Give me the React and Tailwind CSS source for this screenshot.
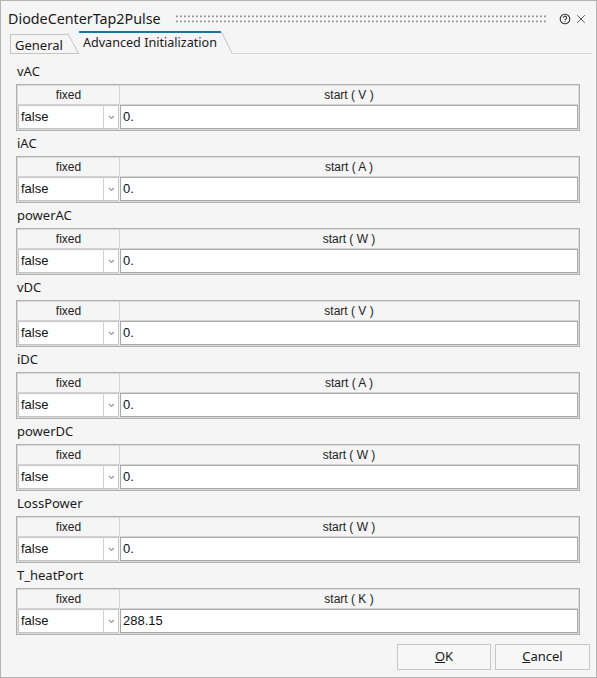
import { X } from 'lucide-react';

const sections = [
  { name: 'vAC', unit: 'V', value: '0.' },
  { name: 'iAC', unit: 'A', value: '0.' },
  { name: 'powerAC', unit: 'W', value: '0.' },
  { name: 'vDC', unit: 'V', value: '0.' },
  { name: 'iDC', unit: 'A', value: '0.' },
  { name: 'powerDC', unit: 'W', value: '0.' },
  { name: 'LossPower', unit: 'W', value: '0.' },
  { name: 'T_heatPort', unit: 'K', value: '288.15' },
];

const ui = { fontFamily: '"Noto Sans", "Open Sans", sans-serif' };
const arial = { fontFamily: '"Liberation Sans", Arial, sans-serif' };

function Dots() {
  return (
    <svg className="flex-1 h-[8px] ml-[15px] mr-[12px]" preserveAspectRatio="none">
      <defs>
        <pattern id="grip" width="4" height="5" patternUnits="userSpaceOnUse">
          <rect x="0" y="0.5" width="1.8" height="1.8" fill="#939393" />
        </pattern>
      </defs>
      <rect width="100%" height="8" fill="url(#grip)" />
    </svg>
  );
}

function HelpIcon() {
  return (
    <svg width="12" height="12" viewBox="0 0 12 12" className="text-[#333]">
      <circle cx="6" cy="6" r="4.8" fill="none" stroke="currentColor" strokeWidth="1.1" />
      <path d="M4.4 4.8a1.6 1.6 0 1 1 2.3 1.4c-.5.3-.7.5-.7 1" fill="none" stroke="currentColor" strokeWidth="1.1" />
      <circle cx="6" cy="8.6" r=".6" fill="currentColor" />
    </svg>
  );
}

function Slant({ h }) {
  return (
    <svg width="12" height={h} className="shrink-0">
      <line x1="0.5" y1="0" x2="11.5" y2={h} stroke="#c4c4c4" strokeWidth="1" />
    </svg>
  );
}

function Chevron() {
  return (
    <svg width="7" height="5" viewBox="0 0 7 5">
      <path d="M1 1l2.5 2.5L6 1" fill="none" stroke="#9a9a9a" strokeWidth="1.2" />
    </svg>
  );
}

function Section({ item }) {
  return (
    <div>
      <div className="h-[25px] flex items-center pl-[1px] text-[13px] text-[#1a1a1a]" style={ui}>
        {item.name}
      </div>
      <div className="border border-[#b0b0b0] p-px bg-[#dadada]">
        <div className="bg-[#f5f5f5]" style={arial}>
          <div className="flex h-[19px] border-b border-[#d4d4d4] text-[12px] text-[#222] leading-[18px]">
            <div className="w-[102px] text-center border-r border-[#d4d4d4]">fixed</div>
            <div className="flex-1 text-center">start ( {item.unit} )</div>
          </div>
          <div className="flex h-[24px] gap-px text-[13px] text-[#111]">
            <div className="w-[101px] flex bg-white border border-[#c6c6c6]">
              <div className="flex-1 pl-[2px] leading-[22px]">false</div>
              <div className="w-[15px] border-l border-[#d0d0d0] flex items-center justify-center">
                <Chevron />
              </div>
            </div>
            <div className="flex-1 bg-white border border-[#a9a9a9] pl-[2px] leading-[22px]">{item.value}</div>
          </div>
        </div>
      </div>
    </div>
  );
}

export default function App() {
  return (
    <div className="w-[597px] h-[678px] bg-[#f5f5f5] border border-[#b4b4b4] flex flex-col text-[#1a1a1a]">
      <div className="h-[30px] flex items-center pl-[7px] pr-[8px] pt-[6px]">
        <span className="text-[14.3px] text-[#1a1a1a]" style={ui}>DiodeCenterTap2Pulse</span>
        <Dots />
        <div className="flex items-center gap-[3px]">
          <HelpIcon />
          <X size={14} strokeWidth={1.4} className="text-[#333]" />
        </div>
      </div>

      <div className="flex items-end h-[23px] pl-[9px] pr-[4px]" style={ui}>
        <div className="flex items-end h-[20px] border-b border-[#c4c4c4]">
          <div className="h-full border-l border-t border-[#c4c4c4] px-[4px] text-[13px] leading-[20px] bg-[#f5f5f5]">General</div>
          <Slant h={20} />
        </div>
        <div className="flex items-end h-[23px]">
          <div className="h-full border-t-2 border-[#1877a6] px-[4px] text-[12.6px] leading-[20px]">Advanced Initialization</div>
          <svg width="12" height="23" className="shrink-0">
            <line x1="0.5" y1="1" x2="11.5" y2="23" stroke="#c4c4c4" strokeWidth="1" />
          </svg>
        </div>
        <div className="flex-1 border-b border-[#d8d8d8]" />
      </div>

      <div className="flex flex-col pl-[15px] pr-[16px] pt-[5px]">
        {sections.map((s) => (
          <Section key={s.name} item={s} />
        ))}
      </div>

      <div className="flex-1" />
      <div className="flex justify-end gap-[4px] pr-[6px] pb-[7px]" style={ui}>
        <button className="w-[94px] h-[26px] border border-[#c6c6c6] bg-[#f7f7f7] text-[13px] text-[#1a1a1a]">
          <span className="underline">O</span>K
        </button>
        <button className="w-[95px] h-[26px] border border-[#c6c6c6] bg-[#f7f7f7] text-[13px] text-[#1a1a1a]">
          <span className="underline">C</span>ancel
        </button>
      </div>
    </div>
  );
}
